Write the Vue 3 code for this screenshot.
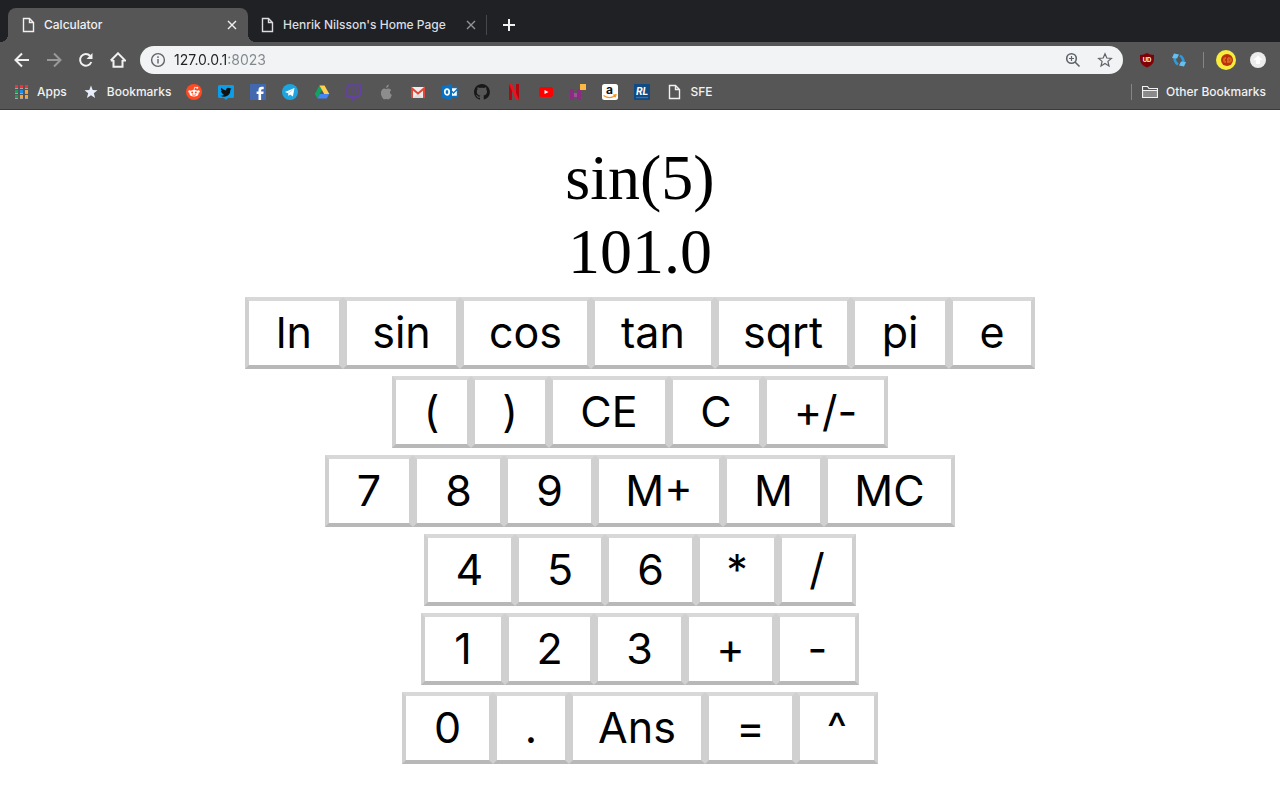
<script setup>
import { ref } from 'vue'

const address = ref('127.0.0.1:8023')
const expression = ref('sin(5)')
const result = ref('101.0')

// Each key is a label with its width in pixels.
const rows = [
  [['ln', 98], ['sin', 117], ['cos', 131], ['tan', 124], ['sqrt', 136], ['pi', 98], ['e', 86]],
  [['(', 79], [')', 78], ['CE', 120], ['C', 94], ['+/-', 125]],
  [['7', 88], ['8', 91], ['9', 91], ['M+', 128], ['M', 101], ['MC', 131]],
  [['4', 91], ['5', 90], ['6', 91], ['*', 82], ['/', 78]],
  [['1', 84], ['2', 89], ['3', 91], ['+', 91], ['-', 83]],
  [['0', 91], ['.', 76], ['Ans', 136], ['=', 91], ['^', 82]],
]
</script>

<template>
  <div class="browser">
    <header class="chrome">
      <div class="tabs">
        <div class="tab active">
          <svg class="icon" viewBox="0 0 16 16"><path d="M3.5 1.5h6l4 4v9h-10zM9.5 1.5v4h4" /></svg>
          <span class="tab-title">Calculator</span>
          <button class="close" aria-label="Close Calculator"><svg viewBox="0 0 10 10"><path d="M1 1l8 8M9 1l-8 8" /></svg></button>
        </div>
        <div class="tab">
          <svg class="icon" viewBox="0 0 16 16"><path d="M3.5 1.5h6l4 4v9h-10zM9.5 1.5v4h4" /></svg>
          <span class="tab-title">Henrik Nilsson's Home Page</span>
          <button class="close" aria-label="Close Henrik Nilsson's Home Page"><svg viewBox="0 0 10 10"><path d="M1 1l8 8M9 1l-8 8" /></svg></button>
        </div>
        <span class="tab-rule"></span>
        <button class="new-tab" aria-label="New tab"><svg viewBox="0 0 12 12"><path d="M6 0v12M0 6h12" /></svg></button>
      </div>

      <nav class="toolbar">
        <button class="tool" aria-label="Back"><svg viewBox="0 0 16 16"><path d="M15 8H2M8 1.5L1.5 8 8 14.5" /></svg></button>
        <button class="tool faded" aria-label="Forward"><svg viewBox="0 0 16 16"><path d="M1 8h13M8 1.5L14.500 8 8 14.5" /></svg></button>
        <button class="tool" aria-label="Reload"><svg viewBox="0 0 16 16"><path d="M13.300 10A5.800 5.800 0 1 1 12.200 4" /><path class="solid" d="M14.500 1v6h-6z" /></svg></button>
        <button class="tool" aria-label="Home"><svg viewBox="0 0 16 16"><path d="M3.500 8v6.800h9V8M.8 8.500L8 1.300l7.200 7.200H12.500M3.500 8.500H.8" /></svg></button>
        <div class="omnibox">
          <svg class="icon dark" viewBox="0 0 16 16"><circle cx="8" cy="8" r="6.400" /><path d="M8 7v4.500M8 4.300v1.700" /></svg>
          <input v-model="address" class="address" aria-label="Address" />
          <button class="tool dark" aria-label="Zoom"><svg viewBox="0 0 16 16"><circle cx="6.500" cy="6.500" r="4.800" /><path d="M10 10l4.500 4.500" /><path class="thin" d="M6.500 4v5M4 6.500h5" /></svg></button>
          <button class="tool dark" aria-label="Bookmark this page"><svg viewBox="0 0 16 16"><path class="thin" d="M8 1.800l1.800 4.200 4.600.4-3.500 3 1.100 4.500L8 11.500l-4 2.400 1.100-4.500-3.500-3L6.200 6z" /></svg></button>
        </div>
        <button class="tool" aria-label="Ad blocker">
          <svg class="art" viewBox="0 0 16 16"><path fill="#800008" d="M8 1q3 2 7 2v4q0 6-7 8.500Q1 13 1 7V3q4 0 7-2z" /><text x="8" y="10" font-size="6" font-weight="700" text-anchor="middle" fill="#fff">UD</text></svg>
        </button>
        <button class="tool" aria-label="Refresh extension">
          <svg class="art" viewBox="0 0 16 16"><path d="M3.800 4.500Q2.800 9.500 7 12.500M12.200 11.500Q13.200 6.500 9 3.500" fill="none" stroke="#2d9bdc" stroke-width="2.600" /><path fill="#64c0f0" d="M1 6L3 1.500l5 1-2 4zM15 10l-2 4.500-5-1 2-4z" /></svg>
        </button>
        <span class="rule"></span>
        <button class="tool profile" aria-label="Profile">
          <svg class="art avatar" viewBox="0 0 20 20"><circle cx="10" cy="10" r="10" fill="#f8ed3c" /><circle cx="11" cy="10" r="6" fill="#b9320d" /><path d="M10 8a2 2 0 1 0 0 4M12 8v4q3 0 3-2t-3-2" fill="none" stroke="#d8651c" /></svg>
        </button>
        <button class="tool" aria-label="Update">
          <svg class="art" viewBox="0 0 16 16"><circle cx="8" cy="8" r="8" fill="#ececec" /><path fill="#fff" d="M8 3.500L3.500 8H6v4h4V8h2.500z" /></svg>
        </button>
      </nav>

      <nav class="bookmarks" aria-label="Bookmarks">
        <a href="#" class="named">
          <svg class="icon art" viewBox="0 0 16 16">
            <path fill="#f4303a" d="M2 1h3v3H2zM7 1h3v3H7zM12 1h3v3h-3z" /><path fill="#17a05c" d="M2 6h3v3H2zM2 11h3v3H2z" />
            <path fill="#1c8ef0" d="M7 6h3v3H7z" /><path fill="#f5a638" d="M12 6h3v3h-3zM7 11h3v3H7zM12 11h3v3h-3z" />
            <path fill="#a5a5a5" d="M2 4h3v1H2zM7 4h3v1H7zM12 4h3v1h-3zM2 9h3v1H2zM7 9h3v1H7zM12 9h3v1h-3zM2 14h3v1H2zM7 14h3v1H7zM12 14h3v1h-3z" />
          </svg>
          <span>Apps</span>
        </a>
        <a href="#" class="named">
          <svg class="icon art" viewBox="0 0 16 16"><path fill="#e8edfb" d="M8 1.500l1.700 4.400 4.800.3-3.700 3 1.300 4.800L8 11.300 3.900 14l1.300-4.800-3.700-3 4.800-.3z" /></svg>
          <span>Bookmarks</span>
        </a>
        <div class="sites">
          <a href="#" aria-label="Reddit"><svg class="icon art" viewBox="0 0 16 16"><circle cx="8" cy="8" r="8" fill="#ff4a22" /><ellipse cx="8" cy="9.200" rx="4.500" ry="3.200" fill="#fff" /><circle cx="3.500" cy="7.500" r="1.200" fill="#fff" /><circle cx="12.500" cy="7.500" r="1.200" fill="#fff" /><circle cx="11.300" cy="3.800" r="1" fill="#fff" /><path d="M8 6l.7-2.800 2.500.6" fill="none" stroke="#fff" stroke-width=".8" /><circle cx="6.200" cy="8.500" r="1" fill="#ff4a22" /><circle cx="9.800" cy="8.500" r="1" fill="#ff4a22" /><path d="M6 10.700q2 1.200 4 0" fill="none" stroke="#ff4a22" stroke-width=".8" /></svg></a>
          <a href="#" aria-label="Twitter"><svg class="icon art" viewBox="0 0 16 16"><path fill="#0b9ee8" d="M1.500 1h13q1.500 0 1.500 1.500v10q0 1.500-1.500 1.500H10l-2 2-2-2H1.500Q0 14 0 12.500v-10Q0 1 1.500 1z" /><path fill="#111" d="M13.500 4.200l-1.300.4q-1.800-1.700-3.600 0-.7.800-.5 1.800Q5.200 6.200 3.200 3.800q-1 2 .7 3.300l-1-.2q.2 1.800 2 2.300H4q.5 1.400 2.200 1.500Q4.500 12 2.500 11.700 7 14 10.500 11q2-2 1.900-5z" /></svg></a>
          <a href="#" aria-label="Facebook"><svg class="icon art" viewBox="0 0 16 16"><path fill="#4268b0" d="M0 0h16v16H0z" /><path fill="#fff" d="M8.500 16v-6H6.600V7.500h1.900V6q0-3.200 3.200-3.200h2v2.400h-1.300q-1.300 0-1.300 1.200v1.100h2.600l-.4 2.500h-2.200v6z" /></svg></a>
          <a href="#" aria-label="Telegram"><svg class="icon art" viewBox="0 0 16 16"><circle cx="8" cy="8" r="8" fill="#1ea5df" /><path fill="#fff" d="M3 8l9.500-4-1.600 8.500-2.900-2-1.500 1.500-.4-2.800z" /><path d="M6.200 9.200L10.500 6" stroke="#9ed2ee" stroke-width=".8" /></svg></a>
          <a href="#" aria-label="Drive"><svg class="icon art" viewBox="0 0 16 16"><path fill="#12a262" d="M5.400 1.500L8 6 3.300 14.500.8 10z" /><path fill="#ffd04d" d="M5.400 1.500h5.100L15.300 10h-5.100z" /><path fill="#4285f4" d="M5.900 10h9.400l-2.600 4.500H3.300z" /></svg></a>
          <a href="#" aria-label="Twitch"><svg class="icon art" viewBox="0 0 16 16"><path d="M2.200 1.200h12.600v8.600L11.500 13H9l-2.500 2.300V13H1.200V4z" fill="none" stroke="#6441a4" stroke-width="2" /><path d="M7 4.500v4M11 4.500v4" stroke="#6441a4" stroke-width="1.600" /></svg></a>
          <a href="#" aria-label="Apple"><svg class="icon art" viewBox="0 0 16 16"><path fill="#8d8d8d" d="M10.800.5q.2 2.700-2.700 3.600Q8 1.400 10.800.5zM8.200 5Q9 4.400 10.500 4.400q1.800 0 2.800 1.500-3 2.300.5 5-.8 3.200-3 4.400-.8.200-2-.4-1 0-1.900.4-1.800.4-3.300-3-1.600-4.200.6-6.900Q5.800 3.800 8.200 5z" /></svg></a>
          <a href="#" aria-label="Gmail"><svg class="icon art" viewBox="0 0 16 16"><path fill="#eee" d="M1 3h14v11H1z" /><path fill="#ddd" d="M3 14l5-5 5 5z" /><path d="M2 14V4.500L8 9.500l6-5V14" fill="none" stroke="#df4839" stroke-width="2" /></svg></a>
          <a href="#" aria-label="Outlook"><svg class="icon art" viewBox="0 0 16 16"><path fill="#fff" d="M9 3.500h6.500v9H9z" /><path d="M9 3.500h6.500v9H9M9.500 7l2 2 4-4" fill="none" stroke="#0872c4" /><path fill="#0872c4" d="M0 2l10-2v16L0 14z" /><ellipse cx="5" cy="8" rx="2.200" ry="2.800" fill="none" stroke="#fff" stroke-width="1.700" /></svg></a>
          <a href="#" aria-label="GitHub"><svg class="icon art" viewBox="0 0 16 16"><path fill="#181818" fill-rule="evenodd" d="M8 0C3.600 0 0 3.600 0 8c0 3.500 2.300 6.500 5.500 7.600.4.100.5-.2.500-.4v-1.500c-2 .4-2.700-.5-2.900-1-.1-.2-.5-1-.8-1.200-.3-.1-.7-.5 0-.5s1.100.6 1.200.8c.7 1.200 1.900.9 2.400.7 0-.5.3-.9.500-1.100-1.800-.2-3.600-.9-3.600-4 0-.8.300-1.500.8-2.100-.1-.2-.4-1 .1-2.100 0 0 .7-.2 2.200.8 1.300-.4 2.700-.4 4 0 1.500-1 2.200-.8 2.200-.8.400 1.100.2 1.900.1 2.100.5.600.8 1.300.8 2.100 0 3.100-1.900 3.800-3.700 4 .3.300.5.700.5 1.400v2.400c0 .2.200.5.600.4A8 8 0 0 0 8 0z" /></svg></a>
          <a href="#" aria-label="Netflix"><svg class="icon art" viewBox="0 0 16 16"><path d="M4.500 0v16M11.500 0v16" stroke="#b20710" stroke-width="3" /><path d="M3 0h3l7 16h-3z" fill="#f0121f" /></svg></a>
          <a href="#" aria-label="YouTube"><svg class="icon art" viewBox="0 0 16 16"><rect x="1" y="3" width="14" height="10" rx="2.500" fill="#f00" /><path fill="#fff" d="M6.500 6l4 2-4 2z" /></svg></a>
          <a href="#" aria-label="Hackathon"><svg class="icon art" viewBox="0 0 16 16"><path fill="#8c2b83" d="M0 5h4v4h3V5h4v11H7v-3H4v3H0z" /><path fill="#a24e99" d="M4 9h3v4H4z" /><path fill="#fcb941" d="M10 0h6v6h-6z" /></svg></a>
          <a href="#" aria-label="Amazon"><svg class="icon art" viewBox="0 0 16 16"><rect width="16" height="16" rx="2.500" fill="#fff" /><text x="7.500" y="10" font-size="12" font-weight="700" text-anchor="middle" fill="#111">a</text><path d="M1.500 11.500q6 4 11.500.3M11 11l3-.3-.8 2.500" fill="none" stroke="#f7981d" stroke-width="1.200" /></svg></a>
          <a href="#" aria-label="Reading Lists"><svg class="icon art" viewBox="0 0 16 16"><path fill="#124a83" d="M0 0h16v16H0z" /><text x="8" y="11" font-size="10" font-weight="700" font-style="italic" text-anchor="middle" fill="#fff">RL</text><path d="M2 13.500h12" stroke="#3472aa" /></svg></a>
        </div>
        <a href="#" class="named">
          <svg class="icon" viewBox="0 0 16 16"><path d="M3.5 1.5h6l4 4v9h-10zM9.5 1.5v4h4" /></svg>
          <span>SFE</span>
        </a>
        <span class="rule push"></span>
        <a href="#" class="named">
          <svg class="icon" viewBox="0 0 16 16"><path class="thin" d="M.5 13.500v-11h5l1.500 2h8.500v9z" /><path fill="#8a8a8a" class="thin" d="M.5 6.500h15v7H.5z" /></svg>
          <span>Other Bookmarks</span>
        </a>
      </nav>
    </header>

    <main class="calculator">
      <output class="display">
        <span>{{ expression }}</span>
        <span>{{ result }}</span>
      </output>
      <div v-for="(row, index) in rows" :key="index" class="row">
        <button v-for="[label, width] in row" :key="label" class="key" :style="{ width: width + 'px' }">{{ label }}</button>
      </div>
    </main>
  </div>
</template>

<style>
body {
  margin: 0;
  background: #fff;
}
</style>

<style scoped>
.browser {
  font-family: Inter, "Liberation Sans", sans-serif;
}
button {
  font: inherit;
  color: inherit;
}
svg {
  display: block;
  fill: none;
  stroke: currentColor;
  stroke-width: 2;
}
.chrome {
  background: #565656;
  color: #f1f1f1;
  font-size: 12px;
  font-weight: 500;
  border-bottom: 1px solid #3b3b3b;
}
.icon {
  width: 16px;
  height: 16px;
  flex: none;
  stroke-width: 1.4;
}
.thin {
  stroke-width: 1.2;
}
.solid {
  fill: currentColor;
  stroke: none;
}
svg.art {
  stroke: none;
  overflow: visible;
}
.tabs {
  display: flex;
  align-items: center;
  height: 34px;
  padding: 8px 8px 0;
  background: #202124;
}
.tab {
  display: flex;
  align-items: center;
  box-sizing: border-box;
  width: 239px;
  height: 34px;
  padding: 0 9px 0 12px;
  gap: 8px;
  color: #dadce0;
}
.tab.active {
  position: relative;
  width: 240px;
  background: #565656;
  border-radius: 8px 8px 0 0;
  color: #f1f1f1;
}
.tab:not(.active) {
  padding-left: 11px;
}
.tab.active::before,
.tab.active::after {
  content: "";
  position: absolute;
  bottom: 0;
  width: 8px;
  height: 8px;
}
.tab.active::before {
  right: 100%;
  background: radial-gradient(circle at 0 0, #202124 8px, #565656 8px);
}
.tab.active::after {
  left: 100%;
  background: radial-gradient(circle at 100% 0, #202124 8px, #565656 8px);
}
.tab-title {
  flex: 1;
  padding-bottom: 2px;
  white-space: nowrap;
}
.close,
.new-tab,
.tool {
  flex: none;
  padding: 0;
  border: 0;
  background: none;
}
.close svg {
  width: 10px;
  height: 10px;
  margin: 2px;
  stroke-width: 1.4;
}
.tab:not(.active) .close {
  color: #909295;
}
.tab-rule {
  width: 1px;
  height: 20px;
  margin-left: -1px;
  background: #47484b;
}
.new-tab {
  margin-left: 16px;
}
.new-tab svg {
  width: 12px;
  height: 12px;
}
.toolbar {
  display: flex;
  align-items: center;
  gap: 16px;
  height: 36px;
  padding: 0 14px;
}
.tool svg {
  width: 16px;
  height: 16px;
}
.tool svg.avatar {
  width: 20px;
  height: 20px;
}
.profile {
  margin: 0 -2px 0 -4px;
}
.faded {
  color: #999;
}
.dark {
  color: #5f6368;
}
.dark svg {
  stroke-width: 1.6;
}
.omnibox {
  display: flex;
  flex: 1;
  align-items: center;
  gap: 16px;
  height: 28px;
  margin-left: -2px;
  padding: 0 10px;
  border-radius: 14px;
  background: #f1f3f4;
}
.address {
  flex: 1;
  min-width: 0;
  height: 20px;
  margin-left: -8px;
  padding: 0 0 2px;
  border: 0;
  outline: 0;
  box-sizing: border-box;
  font: 14px Inter, "Liberation Sans", sans-serif;
  color: transparent;
  background: linear-gradient(90deg, #202124 54px, #80868b 54px);
  background-clip: text;
}
.rule {
  flex: none;
  width: 1px;
  height: 16px;
  background: #858585;
}
.bookmarks {
  display: flex;
  align-items: center;
  gap: 16px;
  height: 27px;
  padding: 0 14px 4px 13px;
}
.bookmarks a {
  color: inherit;
  text-decoration: none;
}
.sites {
  display: flex;
  gap: 16px;
  margin-left: -1px;
}
.named {
  display: flex;
  align-items: center;
  gap: 8px;
  white-space: nowrap;
}
.push {
  margin-left: auto;
}
.bookmarks .push + a {
  margin-left: -6px;
}
.calculator {
  padding: 31px 8px;
}
.display {
  display: flex;
  flex-direction: column;
  align-items: center;
  margin-bottom: 8px;
  font: 64px/74px "Liberation Serif", serif;
  color: #000;
}
.row {
  display: flex;
  justify-content: center;
  margin-bottom: 7px;
}
.key {
  box-sizing: border-box;
  height: 72px;
  padding: 0 0 2px;
  border: 4px solid;
  border-color: #d8d8d8 #d0d0d0 #b8b8b8;
  background: #fff;
  color: #000;
  font-size: 43px;
  line-height: 62px;
}
</style>
